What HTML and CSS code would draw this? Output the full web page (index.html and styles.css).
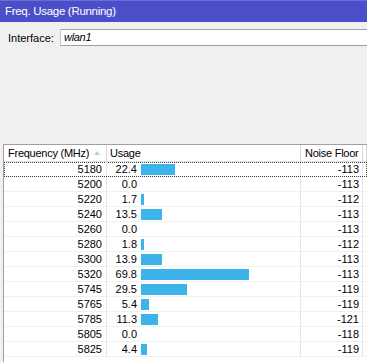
FILE: index.html
```html
<!DOCTYPE html>
<html>
<head>
<meta charset="utf-8">
<link rel="stylesheet" href="styles.css">
</head>
<body>
<div class="title">Freq. Usage (Running)</div>
<div class="panel">
  <div class="iface">
    <span class="label">Interface:</span>
    <div class="input">wlan1</div>
  </div>
</div>
<div class="grid">
  <div class="row head">
    <div class="c freq">Frequency (MHz)<span class="sort"></span></div>
    <div class="c usage">Usage</div>
    <div class="c noise">Noise Floor</div>
    <div class="c extra"></div>
  </div>
  <div class="row focus"><div class="c freq">5180</div><div class="c usage"><span class="num">22.4</span><span class="bar" style="width:34px"></span></div><div class="c noise">-113</div><div class="c extra"></div></div>
  <div class="row"><div class="c freq">5200</div><div class="c usage"><span class="num">0.0</span></div><div class="c noise">-113</div><div class="c extra"></div></div>
  <div class="row"><div class="c freq">5220</div><div class="c usage"><span class="num">1.7</span><span class="bar" style="width:3px"></span></div><div class="c noise">-112</div><div class="c extra"></div></div>
  <div class="row"><div class="c freq">5240</div><div class="c usage"><span class="num">13.5</span><span class="bar" style="width:21px"></span></div><div class="c noise">-113</div><div class="c extra"></div></div>
  <div class="row"><div class="c freq">5260</div><div class="c usage"><span class="num">0.0</span></div><div class="c noise">-113</div><div class="c extra"></div></div>
  <div class="row"><div class="c freq">5280</div><div class="c usage"><span class="num">1.8</span><span class="bar" style="width:3px"></span></div><div class="c noise">-112</div><div class="c extra"></div></div>
  <div class="row"><div class="c freq">5300</div><div class="c usage"><span class="num">13.9</span><span class="bar" style="width:21px"></span></div><div class="c noise">-113</div><div class="c extra"></div></div>
  <div class="row"><div class="c freq">5320</div><div class="c usage"><span class="num">69.8</span><span class="bar" style="width:108px"></span></div><div class="c noise">-113</div><div class="c extra"></div></div>
  <div class="row"><div class="c freq">5745</div><div class="c usage"><span class="num">29.5</span><span class="bar" style="width:46px"></span></div><div class="c noise">-119</div><div class="c extra"></div></div>
  <div class="row"><div class="c freq">5765</div><div class="c usage"><span class="num">5.4</span><span class="bar" style="width:8px"></span></div><div class="c noise">-119</div><div class="c extra"></div></div>
  <div class="row"><div class="c freq">5785</div><div class="c usage"><span class="num">11.3</span><span class="bar" style="width:17px"></span></div><div class="c noise">-121</div><div class="c extra"></div></div>
  <div class="row"><div class="c freq">5805</div><div class="c usage"><span class="num">0.0</span></div><div class="c noise">-118</div><div class="c extra"></div></div>
  <div class="row"><div class="c freq">5825</div><div class="c usage"><span class="num">4.4</span><span class="bar" style="width:6px"></span></div><div class="c noise">-119</div><div class="c extra"></div></div>
</div>
</body>
</html>
```
FILE: styles.css
```css
html, body {
  margin: 0;
  padding: 0;
  width: 367px;
  height: 362px;
  overflow: hidden;
  background: #f0f0f0;
  font-family: "Liberation Sans", Arial, sans-serif;
  font-size: 11px;
  color: #000;
}
.title {
  height: 21px;
  line-height: 21px;
  background: #4a4fc9;
  border-top: 1px solid #6a6ed6;
  color: #fff;
  font-size: 11.5px;
  letter-spacing: -0.3px;
  padding-left: 5px;
}
.panel {
  height: 122px;
  background: #f0f0f0;
}
.iface {
  display: flex;
  align-items: center;
  padding-top: 7px;
}
.label {
  width: 52px;
  padding-left: 8px;
}
.input {
  flex: 1;
  height: 15px;
  line-height: 15px;
  background: #fff;
  border-top: 1px solid #a0a0a0;
  border-bottom: 1px solid #a0a0a0;
  border-left: 1px solid #c8c8c8;
  padding-left: 3px;
  font-style: italic;
  letter-spacing: -0.3px;
}
.grid {
  margin-left: 3px;
  border-left: 1px solid #a0a0a0;
  border-top: 1px solid #a0a0a0;
  background: #fff;
  height: 217px;
  overflow: hidden;
}
.row {
  display: flex;
  height: 14px;
  border-bottom: 1px solid #f0f0f0;
  line-height: 14px;
}
.row.head {
  height: 16px;
  line-height: 16px;
  border-bottom: 1px solid #e0e0e0;
}
.row.focus {
  outline: 1px dotted #444;
  outline-offset: -1px;
}
.c {
  box-sizing: border-box;
  border-right: 1px solid #e4e4e4;
  white-space: nowrap;
  overflow: hidden;
}
.head .c {
  border-right: 1px solid #d8d8d8;
  letter-spacing: -0.25px;
}
.freq {
  width: 103px;
  text-align: right;
  padding-right: 4px;
  position: relative;
}
.head .freq {
  text-align: left;
  padding-left: 4px;
}
.sort {
  position: absolute;
  left: 90px;
  top: 6px;
  width: 0;
  height: 0;
  border-left: 3px solid transparent;
  border-right: 3px solid transparent;
  border-bottom: 4px solid #c8c8c8;
}
.usage {
  width: 194px;
  display: flex;
  align-items: center;
}
.head .usage {
  padding-left: 3px;
}
.num {
  width: 30px;
  text-align: right;
  flex: none;
}
.bar {
  margin-left: 4px;
  height: 11px;
  background: #3cb4ea;
  flex: none;
}
.noise {
  width: 62px;
  text-align: right;
  padding-right: 3px;
}
.head .noise {
  text-align: left;
  padding-left: 4px;
}
.extra {
  flex: 1;
  border-right: none;
}
```
